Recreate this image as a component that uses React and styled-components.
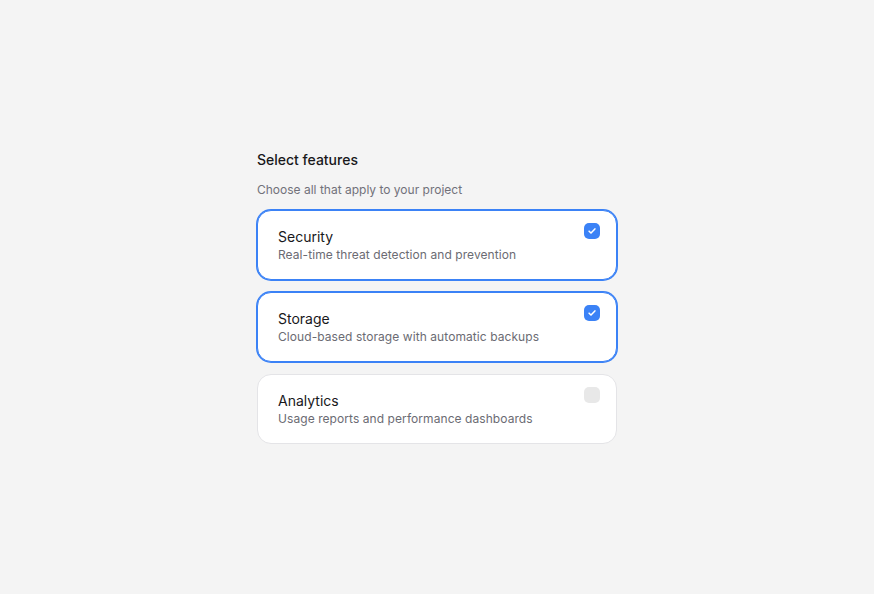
import React, { useState } from 'react'
import styled, { createGlobalStyle } from 'styled-components'

const Global = createGlobalStyle`
  html, body { margin: 0; padding: 0; background: #f4f4f4; }
  body { font-family: Inter, "Noto Sans", sans-serif; -webkit-font-smoothing: antialiased; }
`

const Page = styled.div`
  min-height: 594px;
  display: flex;
  align-items: center;
  justify-content: center;
`

const Group = styled.div`
  width: 360px;
  display: flex;
  flex-direction: column;
`

const Heading = styled.div`
  font-size: 14px;
  line-height: 20px;
  font-weight: 500;
  color: #18181b;
  margin-bottom: 12px;
`

const Sub = styled.div`
  font-size: 12px;
  line-height: 16px;
  color: #71717a;
  margin-bottom: 12px;
`

const List = styled.div`
  display: flex;
  flex-direction: column;
  gap: 12px;
`

const Card = styled.label`
  position: relative;
  display: flex;
  flex-direction: column;
  padding: 16px 20px;
  background: #fff;
  border-radius: 14px;
  border: 1px solid ${p => (p.$on ? '#3b82f6' : '#e4e4e7')};
  box-shadow: ${p => (p.$on ? '0 0 0 1px #3b82f6' : 'none')};
  cursor: pointer;
`

const Title = styled.span`
  font-size: 14px;
  line-height: 20px;
  font-weight: 400;
  color: #18181b;
`

const Desc = styled.span`
  font-size: 12px;
  line-height: 16px;
  letter-spacing: 0.07px;
  color: #6b6b73;
`

const Box = styled.span`
  position: absolute;
  top: 12px;
  right: 16px;
  width: 16px;
  height: 16px;
  border-radius: 5px;
  background: ${p => (p.$on ? '#3b82f6' : '#e8e8e8')};
  display: flex;
  align-items: center;
  justify-content: center;
`

const features = [
  { name: 'Security', desc: 'Real-time threat detection and prevention' },
  { name: 'Storage', desc: 'Cloud-based storage with automatic backups' },
  { name: 'Analytics', desc: 'Usage reports and performance dashboards' },
]

export default function App() {
  const [sel, setSel] = useState({ Security: true, Storage: true, Analytics: false })
  return (
    <Page>
      <Global />
      <Group>
        <Heading>Select features</Heading>
        <Sub>Choose all that apply to your project</Sub>
        <List>
          {features.map(f => (
            <Card key={f.name} $on={sel[f.name]} onClick={() => setSel({ ...sel, [f.name]: !sel[f.name] })}>
              <Title>{f.name}</Title>
              <Desc>{f.desc}</Desc>
              <Box $on={sel[f.name]}>
                {sel[f.name] && (
                  <svg width="10" height="10" viewBox="0 0 12 12" fill="none">
                    <path d="M2.5 6.2l2.3 2.3 4.7-5" stroke="#fff" strokeWidth="1.8" strokeLinecap="round" strokeLinejoin="round" />
                  </svg>
                )}
              </Box>
            </Card>
          ))}
        </List>
      </Group>
    </Page>
  )
}
